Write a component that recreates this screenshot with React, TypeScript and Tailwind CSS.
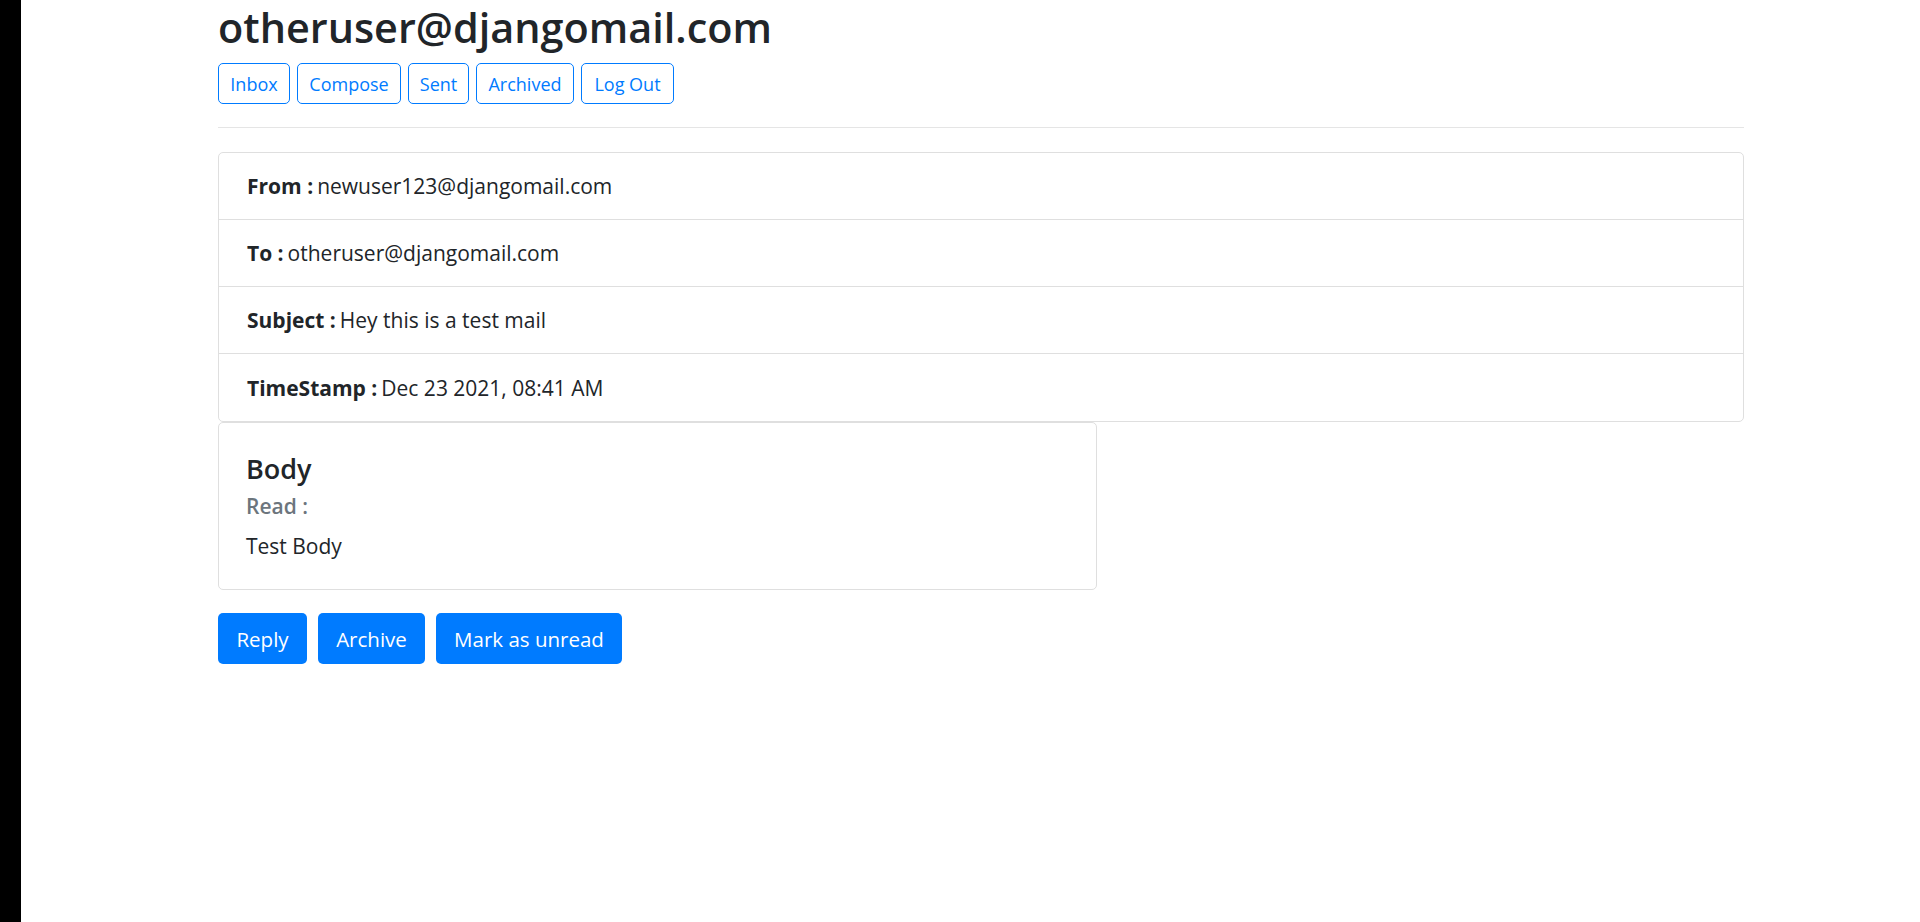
import React from "react";

const navItems = [
  { label: "Inbox", w: "w-[72px]" },
  { label: "Compose", w: "w-[104px]" },
  { label: "Sent", w: "w-[61px]" },
  { label: "Archived", w: "w-[98px]" },
  { label: "Log Out", w: "w-[93px]" },
];

const rows = [
  { k: "From :", v: "newuser123@djangomail.com", h: "h-[66px]" },
  { k: "To :", v: "otheruser@djangomail.com", h: "h-[67px] border-t border-[#dfdfdf]" },
  { k: "Subject :", v: "Hey this is a test mail", h: "h-[67px] border-t border-[#dfdfdf]" },
  { k: "TimeStamp :", v: "Dec 23 2021, 08:41 AM", h: "h-[68px] border-t border-[#dfdfdf]" },
];

const actions = [
  { l: "Reply", w: "w-[89px]" },
  { l: "Archive", w: "w-[107px]" },
  { l: "Mark as unread", w: "w-[186px]" },
];

export default function App() {
  return (
    <div className="flex h-[922px] w-full bg-white font-['Open_Sans',sans-serif] text-[#212529]">
      <div className="w-[21px] shrink-0 bg-black" />
      <div className="pl-[197px]">
        <div className="w-[1526px]">
          <h1 className="m-0 text-[41.4px] font-semibold leading-[54px]">otheruser@djangomail.com</h1>
          <div className="mt-[9px] flex gap-[7px]">
            {navItems.map((n) => (
              <div
                key={n.label}
                className={`${n.w} flex h-[41px] items-center justify-center rounded-[5px] border border-[#007bff] pt-[2px] text-[18px] text-[#007bff]`}
              >
                {n.label}
              </div>
            ))}
          </div>
          <div className="mt-[23px] h-px bg-[#e5e5e5]" />
          <div className="mt-[24px] flex flex-col rounded-[5px] border border-[#dfdfdf]">
            {rows.map((r) => (
              <div key={r.k} className={`flex items-center px-[28px] pt-[2px] text-[21px] ${r.h}`}>
                <span className="font-bold">{r.k}</span>
                <span className="ml-[4px]">{r.v}</span>
              </div>
            ))}
          </div>
          <div className="w-[879px] rounded-[5px] border border-[#dfdfdf] px-[27px] pt-[30px] pb-[27px]">
            <div className="text-[27px] font-semibold leading-[32.4px]">Body</div>
            <div className="mt-[8.5px] text-[21px] font-semibold leading-[25.3px] text-[#6c757d]">Read :</div>
            <p className="mt-[11.5px] text-[21px] leading-[31.5px]">Test Body</p>
          </div>
          <div className="mt-[23px] flex gap-[11px]">
            {actions.map((b) => (
              <div
                key={b.l}
                className={`${b.w} flex h-[51px] items-center justify-center rounded-[5px] bg-[#007bff] pt-[2px] text-[20.5px] text-white`}
              >
                {b.l}
              </div>
            ))}
          </div>
        </div>
      </div>
    </div>
  );
}
